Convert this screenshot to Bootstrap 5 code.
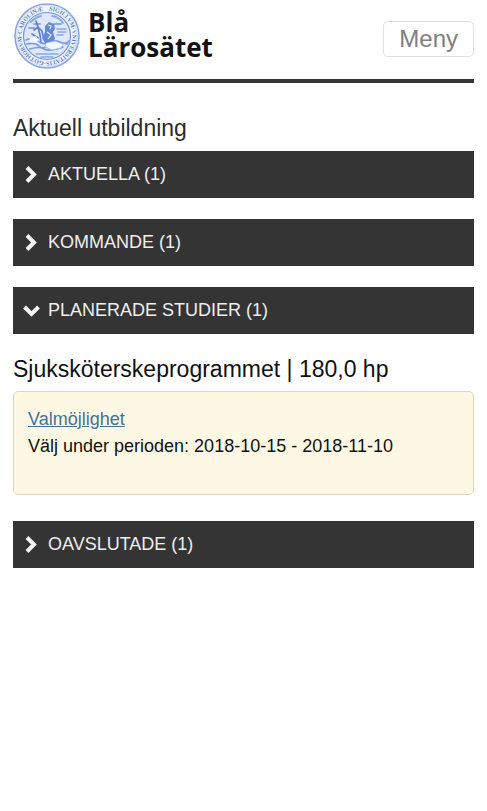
<!DOCTYPE html>
<html lang="sv">
<head>
<meta charset="utf-8">
<meta name="viewport" content="width=device-width, initial-scale=1">
<title>Blå Lärosätet – Aktuell utbildning</title>
<link href="https://cdn.jsdelivr.net/npm/bootstrap@5.3.0/dist/css/bootstrap.min.css" rel="stylesheet">
<style>
body { font-family: "Liberation Sans", Arial, sans-serif; font-size: 18px; line-height: 27px; color: #111; background: #fff; }
.page { padding: 0 13px; }
.site-head { border-bottom: 4px solid #363636; padding-bottom: 9px; }
.seal { width: 66px; height: 68px; margin: 2px 8px 0 1px; }
.brand-name { font-family: "Open Sans", "Noto Sans", sans-serif; font-weight: 700; font-size: 26px; line-height: 25px; color: #111; }
.menu-btn { font-size: 24px; line-height: 28px; padding: 3px 15px; color: #808080; border: 1px solid #e0e0e0; border-radius: 5px; background: #fff; margin-top: 8px; }
.page-title { font-size: 23px; line-height: 30px; color: #2c2c2c; margin: 30px 0 8px; }
.section-btn { font-size: 18px; line-height: 27px; padding: 10px; color: #eee; background: #343434; border: 0; border-radius: 0; margin-bottom: 21px; }
.section-btn:hover { color: #fff; background: #3d3d3d; }
.section-btn svg { width: 17px; height: 17px; margin-right: 8px; }
.prog-title { font-size: 23px; line-height: 30px; color: #111; margin: -1px 0 7px; }
.choice { background: #fdf8e4; border: 1px solid #dcd9c0; border-radius: 5px; padding: 14px 14px 34px; margin-bottom: 26px; }
.choice a { color: #42729c; }
</style>
</head>
<body>
<div class="page container-fluid">
  <header class="site-head d-flex justify-content-between align-items-center">
    <a href="#" class="d-flex align-items-center text-decoration-none">
      <svg class="seal flex-shrink-0" viewBox="0 0 66 68" aria-hidden="true">
        <defs><path id="ring" d="M33 8.500a25.500 25.500 0 1 1-.01 0"/></defs>
        <circle cx="33" cy="34" r="32" fill="#f1f5fe" stroke="#8ba7e6" stroke-width="1.600"/>
        <circle cx="33" cy="34" r="30.500" fill="none" stroke="#c3d2f4" stroke-width=".7"/>
        <text font-family="Liberation Serif, serif" font-weight="700" font-size="6" fill="#5a7fd0"><textPath href="#ring" startOffset="2">SIGILLVM·VNIVERSITATIS·GOTHORVM·CAROLINÆ</textPath></text>
        <circle cx="33" cy="34" r="23.500" fill="#dfe8fb" stroke="#6f92df" stroke-width="1.200"/>
        <g fill="none" stroke="#5e84d8" stroke-linecap="round" stroke-linejoin="round">
          <path d="M17 20q5-5 10-6m11 0q7 1 11 7M20 22h6m14 0h7M15 26h5" stroke-width="1.800" stroke="#8ba7e6"/>
          <path d="M22 19l2 6 2 8 1 8M20 28l4-3 4 4 1 5M18 32l6 4" stroke-width="1.700"/>
          <path d="M12 38q7-3 12 1t9 2q7-4 13-1t9-1M13 42q8-2 12 2t11-1 17-1M16 47q9-3 14 0t19-2" stroke-width="1.600" stroke="#789be3"/>
          <path d="M43 27h9M44 30h8M43 33h6" stroke-width="1.500" stroke="#89a6e5"/>
          <path d="M22 52h22M27 55h12" stroke-width="1.500" stroke="#8ba7e6"/>
        </g>
        <path d="M31 24l4-4 5 2 1 5-2 3 2 7-4 5-6-1-3-5 3-6z" fill="#6689d7"/>
        <path d="M34 23l3 1-1 3M33 30l4 3-3 4" fill="none" stroke="#e6edfc" stroke-width="1.200"/>
        <path d="M32 41l9-2 8 3-2 4-9 2-7-3z" fill="#f3f7ff" stroke="#9cb5eb" stroke-width=".8"/>
        <path d="M16 36l6-2 3 4-4 3-6-1z" fill="#f3f7ff"/>
      </svg>
      <span class="brand-name">Blå<br>Lärosätet</span>
    </a>
    <button type="button" class="btn menu-btn">Meny</button>
  </header>
  <main>
    <h1 class="page-title fw-normal">Aktuell utbildning</h1>
    <button type="button" class="btn section-btn w-100 d-flex align-items-center text-start" aria-expanded="false"><svg viewBox="0 0 17 17" aria-hidden="true"><path d="M4 1.500l7 7-7 7" fill="none" stroke="#f4f4f4" stroke-width="4"/></svg>AKTUELLA (1)</button>
    <button type="button" class="btn section-btn w-100 d-flex align-items-center text-start" aria-expanded="false"><svg viewBox="0 0 17 17" aria-hidden="true"><path d="M4 1.500l7 7-7 7" fill="none" stroke="#f4f4f4" stroke-width="4"/></svg>KOMMANDE (1)</button>
    <button type="button" class="btn section-btn w-100 d-flex align-items-center text-start" aria-expanded="true" aria-controls="planned"><svg viewBox="0 0 17 17" aria-hidden="true"><path d="M1.500 5l7 7 7-7" fill="none" stroke="#f4f4f4" stroke-width="4"/></svg>PLANERADE STUDIER (1)</button>
    <section id="planned">
      <h2 class="prog-title fw-normal">Sjuksköterskeprogrammet | 180,0 hp</h2>
      <div class="choice">
        <a href="#">Valmöjlighet</a>
        <p class="mb-0">Välj under perioden: 2018-10-15 - 2018-11-10</p>
      </div>
    </section>
    <button type="button" class="btn section-btn w-100 d-flex align-items-center text-start" aria-expanded="false"><svg viewBox="0 0 17 17" aria-hidden="true"><path d="M4 1.500l7 7-7 7" fill="none" stroke="#f4f4f4" stroke-width="4"/></svg>OAVSLUTADE (1)</button>
  </main>
</div>
<script src="https://cdn.jsdelivr.net/npm/bootstrap@5.3.0/dist/js/bootstrap.bundle.min.js"></script>
</body>
</html>
